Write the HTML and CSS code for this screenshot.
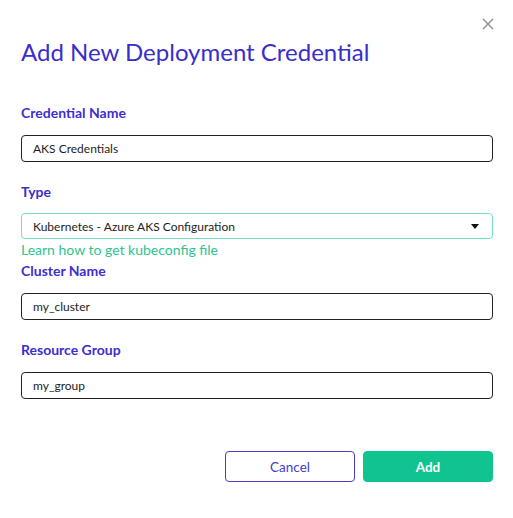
FILE: index.html
```html
<!DOCTYPE html>
<html>
<head>
<meta charset="utf-8">
<link rel="stylesheet" href="styles.css">
</head>
<body>
<div class="modal">
  <button class="close" aria-label="Close">
    <svg width="12" height="12" viewBox="0 0 12 12"><path d="M1 1L11 11M11 1L1 11" stroke="#8a8a8a" stroke-width="1.3" fill="none"/></svg>
  </button>
  <h1 class="title">Add New Deployment Credential</h1>
  <form class="form">
    <div class="field">
      <label class="label">Credential Name</label>
      <div class="input">AKS Credentials</div>
    </div>
    <div class="field">
      <label class="label">Type</label>
      <div class="input select">
        <span>Kubernetes - Azure AKS Configuration</span>
        <svg class="caret" width="8" height="5" viewBox="0 0 8 5"><path d="M0 0H8L4 5Z" fill="#111"/></svg>
      </div>
      <a class="link">Learn how to get kubeconfig file</a>
    </div>
    <div class="field tight">
      <label class="label">Cluster Name</label>
      <div class="input">my_cluster</div>
    </div>
    <div class="field">
      <label class="label">Resource Group</label>
      <div class="input">my_group</div>
    </div>
  </form>
  <div class="actions">
    <button class="btn cancel">Cancel</button>
    <button class="btn add">Add</button>
  </div>
</div>
</body>
</html>
```
FILE: styles.css
```css
html, body {
  margin: 0;
  padding: 0;
  background: #ffffff;
}
body {
  font-family: Lato, "Liberation Sans", sans-serif;
  width: 513px;
  height: 518px;
  overflow: hidden;
}
.modal {
  position: relative;
  padding: 36px 20px 0 21px;
}
.close {
  position: absolute;
  top: 18px;
  right: 19px;
  width: 12px;
  height: 12px;
  padding: 0;
  border: 0;
  background: none;
  display: block;
}
.close svg { display: block; }
.title {
  margin: 0;
  font-size: 24px;
  line-height: 32px;
  font-weight: 400;
  color: #3b2dcc;
}
.form {
  margin-top: 35px;
  display: flex;
  flex-direction: column;
  gap: 20px;
}
.field {
  display: flex;
  flex-direction: column;
}
.field.tight { margin-top: -19px; }
.label {
  font-size: 14px;
  line-height: 20px;
  font-weight: 700;
  color: #3d2fcf;
  margin-bottom: 12px;
}
.input {
  box-sizing: border-box;
  height: 27px;
  border: 1px solid #222;
  border-radius: 4px;
  padding: 0 11px;
  font-size: 12px;
  line-height: 25px;
  color: #1d1d1d;
}
.select {
  height: 26px;
  margin-top: -1px;
  border-color: #72e0ba;
  display: flex;
  align-items: center;
  justify-content: space-between;
  padding-right: 13px;
}
.caret { display: block; }
.link {
  font-size: 14px;
  line-height: 20px;
  color: #2ec391;
  margin-top: 1px;
}
.actions {
  display: flex;
  justify-content: flex-end;
  gap: 8px;
  margin-top: 52px;
}
.btn {
  box-sizing: border-box;
  width: 130px;
  height: 31px;
  border-radius: 4px;
  font-family: inherit;
  font-size: 13.5px;
  cursor: pointer;
}
.cancel {
  background: #fff;
  border: 1px solid #4a3cc9;
  color: #4a3cc9;
}
.add {
  background: #0fc48f;
  border: 1px solid #0fc48f;
  color: #fff;
  font-weight: 700;
}
```
